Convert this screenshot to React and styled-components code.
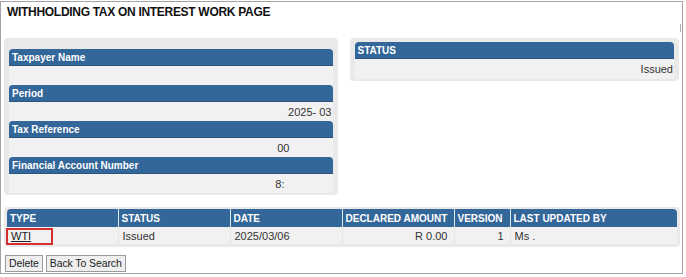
import React from "react";
import styled, { createGlobalStyle } from "styled-components";

const Global = createGlobalStyle`
  html, body { margin: 0; padding: 0; background: #fff; }
  body { font-family: "Liberation Sans", Arial, sans-serif; }
`;

const Frame = styled.div`
  margin-top: 1px;
  width: 683px;
  height: 273px;
  border: 1px solid #a3a3a3;
  box-sizing: border-box;
  padding: 0 3px 0 3px;
  display: flex;
  flex-direction: column;
  position: relative;
`;

const ScrollMark = styled.div`
  position: absolute;
  right: 1px;
  top: 22px;
  width: 1px;
  height: 8px;
  background: #b0b0b0;
`;

const Title = styled.h1`
  margin: 0;
  padding: 3px 0 0 3px;
  height: 36px;
  box-sizing: border-box;
  font-size: 12px;
  font-weight: bold;
  color: #111;
  letter-spacing: -0.3px;
`;

const TopRow = styled.div`
  display: flex;
  align-items: flex-start;
  gap: 12px;
`;

const Panel = styled.div`
  background: #e9e9e9;
  border-radius: 4px;
  box-sizing: border-box;
  width: ${(p) => p.$w}px;
  padding: ${(p) => p.$pt}px 5px ${(p) => p.$pb}px 5px;
  display: flex;
  flex-direction: column;
`;

const Header = styled.div`
  background: #336699;
  color: #fff;
  font-size: 10px;
  font-weight: bold;
  height: 17px;
  line-height: 17px;
  padding-left: 3px;
  border-radius: 4px 4px 0 0;
  border-bottom: 1px solid #2a567f;
  box-sizing: border-box;
`;

const Value = styled.div`
  background: #f1f1f1;
  height: ${(p) => p.$h || 19}px;
  line-height: 21px;
  font-size: 11px;
  color: #333;
  text-align: right;
  padding-right: ${(p) => p.$pr || 1}px;
  box-sizing: border-box;
`;

const TablePanel = styled.div`
  margin-top: 12px;
  width: 676px;
  background: #e9e9e9;
  border-radius: 4px;
  padding: 2px 3px 3px 3px;
  box-sizing: border-box;
`;

const Table = styled.table`
  width: 100%;
  border-collapse: collapse;
  table-layout: fixed;
`;

const Th = styled.th`
  background: #336699;
  color: #fff;
  font-size: 10px;
  font-weight: bold;
  text-align: left;
  height: 18px;
  padding: 0 3px;
  border-left: 1px solid #dfe6ee;
  &:first-child { border-left: none; border-top-left-radius: 4px; }
  &:last-child { border-top-right-radius: 4px; }
`;

const Td = styled.td`
  background: #f1f1f1;
  font-size: 11px;
  color: #333;
  height: 17px;
  padding: 0 ${(p) => (p.$right ? "6px" : "4px")} 0 4px;
  text-align: ${(p) => (p.$right ? "right" : "left")};
  border-left: 1px solid #e4e4e4;
  &:first-child { border-left: none; position: relative; }
`;

const Link = styled.a`
  color: #222;
  text-decoration: underline;
`;

const Highlight = styled.span`
  position: absolute;
  left: -1px;
  top: 1px;
  width: 47px;
  height: 17px;
  border: 2px solid #d32f2f;
  box-sizing: border-box;
  pointer-events: none;
`;

const Buttons = styled.div`
  display: flex;
  gap: 3px;
  margin-top: 8px;
  padding-left: 1px;
`;

const Button = styled.button`
  font-family: "Liberation Sans", Arial, sans-serif;
  font-size: 10.5px;
  color: #222;
  background: #efefef;
  border: 1px solid #9a9a9a;
  height: 17px;
  margin: 0;
  padding: 0 3px;
  line-height: 15px;
  letter-spacing: -0.1px;
`;

const fields = [
  { label: "Taxpayer Name", value: "" },
  { label: "Period", value: "2025- 03" },
  { label: "Tax Reference", value: "00", pr: 43 },
  { label: "Financial Account Number", value: "8:", pr: 48 },
];

const cols = [
  { label: "TYPE", w: 111 },
  { label: "STATUS", w: 112 },
  { label: "DATE", w: 112 },
  { label: "DECLARED AMOUNT", w: 112 },
  { label: "VERSION", w: 56 },
  { label: "LAST UPDATED BY" },
];

export default function App() {
  return (
    <>
      <Global />
      <Frame>
        <ScrollMark />
        <Title>WITHHOLDING TAX ON INTEREST WORK PAGE</Title>
        <TopRow>
          <Panel $w={334} $pt={11} $pb={2}>
            {fields.map((f) => (
              <React.Fragment key={f.label}>
                <Header>{f.label}</Header>
                <Value $pr={f.pr}>{f.value}</Value>
              </React.Fragment>
            ))}
          </Panel>
          <Panel $w={330} $pt={4} $pb={2}>
            <Header>STATUS</Header>
            <Value $h={20}>Issued</Value>
          </Panel>
        </TopRow>
        <TablePanel>
          <Table>
            <colgroup>
              {cols.map((c) => (
                <col key={c.label} style={c.w ? { width: c.w } : undefined} />
              ))}
            </colgroup>
            <thead>
              <tr>
                {cols.map((c) => (
                  <Th key={c.label}>{c.label}</Th>
                ))}
              </tr>
            </thead>
            <tbody>
              <tr>
                <Td>
                  <Link href="#">WTI</Link>
                  <Highlight />
                </Td>
                <Td>Issued</Td>
                <Td>2025/03/06</Td>
                <Td $right>R 0.00</Td>
                <Td $right>1</Td>
                <Td>Ms .</Td>
              </tr>
            </tbody>
          </Table>
        </TablePanel>
        <Buttons>
          <Button>Delete</Button>
          <Button>Back To Search</Button>
        </Buttons>
      </Frame>
    </>
  );
}
